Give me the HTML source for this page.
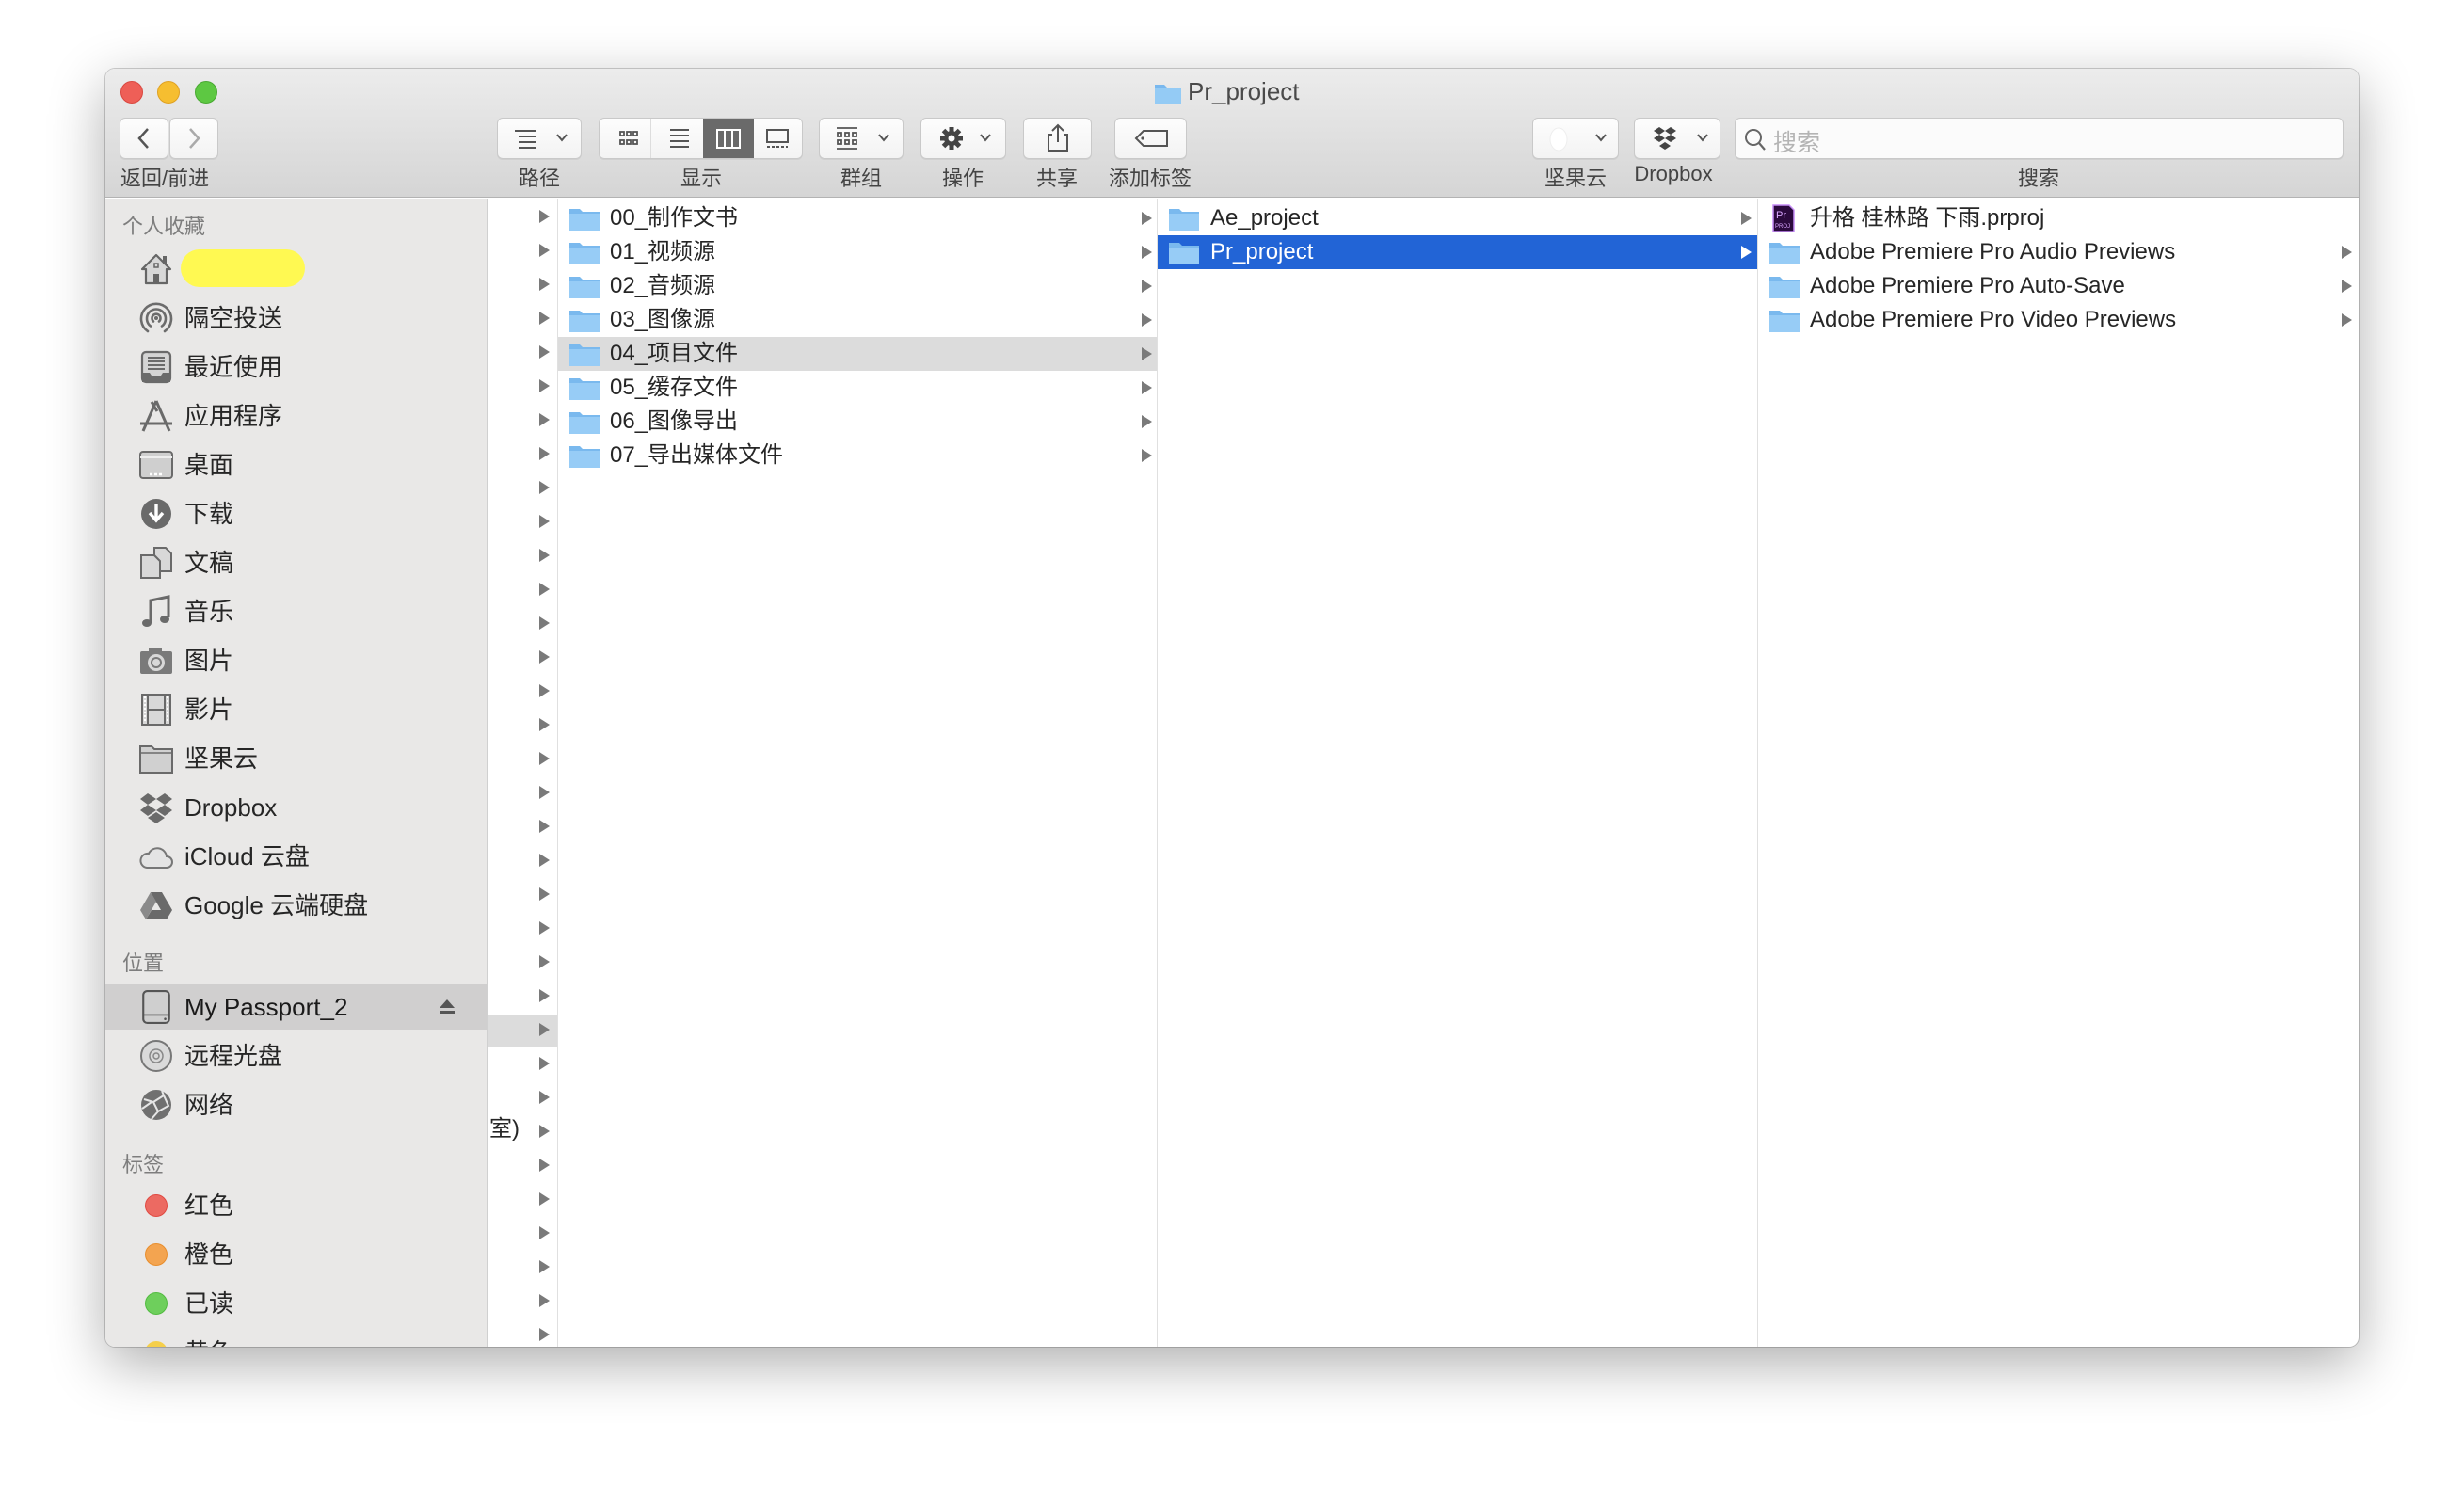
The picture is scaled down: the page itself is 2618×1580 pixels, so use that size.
<!DOCTYPE html>
<html><head><meta charset="utf-8">
<style>
*{margin:0;padding:0;box-sizing:border-box}
body{width:2618px;height:1580px;background:#fff;position:relative;overflow:hidden;font-family:"Liberation Sans","Noto Sans CJK SC",sans-serif;color:#262626}
.win{position:absolute;left:112px;top:73px;width:2394px;height:1358px;border-radius:10px;background:#fff;box-shadow:0 18px 60px rgba(0,0,0,.32),0 0 0 1px rgba(0,0,0,.18);overflow:hidden}
.tb{position:absolute;left:0;top:0;width:100%;height:137px;background:linear-gradient(#ececec,#d5d5d5);border-bottom:1px solid #b3b3b3}
.tl{position:absolute;top:13px;width:24px;height:24px;border-radius:50%}
.btn{position:absolute;top:52px;height:44px;background:linear-gradient(#fdfdfd,#f3f3f3);border:1px solid #c9c9c9;border-radius:6px;box-shadow:0 1px 0 rgba(0,0,0,.05)}
.lbl{position:absolute;top:99px;font-size:22px;color:#444;transform:translateX(-50%);white-space:nowrap}
.side{position:absolute;left:0;top:138px;width:406px;height:1220px;background:#e9e8e7;border-right:1px solid #d0d0d0}
.hd{position:absolute;left:18px;font-size:22px;color:#7d7d7d;transform:translateY(-50%)}
.it{position:absolute;left:0;width:405px;height:52px;font-size:26px;line-height:52px;padding-left:84px;color:#262626}
.ic{position:absolute;left:36px;top:8px;width:36px;height:36px}
.col{position:absolute;top:138px;height:1220px;border-right:1px solid #e0e0e0}
.row{position:absolute;left:0;width:100%;height:36px;font-size:24px;line-height:36px;white-space:nowrap}
.arr{position:absolute;width:0;height:0;border-top:7px solid transparent;border-bottom:7px solid transparent;border-left:11px solid #7a7a7a;top:11px}
.fd{position:absolute;top:6px;width:32px;height:25px}
</style></head><body>
<div class="win">
 <div class="tb">
  <div class="tl" style="left:16px;background:#ee5f57;border:1px solid #d9473f"></div>
  <div class="tl" style="left:55px;background:#f6be30;border:1px solid #dfa123"></div>
  <div class="tl" style="left:95px;background:#5dc842;border:1px solid #48a931"></div>
  <svg style="position:absolute;left:1114px;top:14px" width="30" height="24" viewBox="0 0 30 24"><path d="M1 3h10l3 3h15v17H1z" fill="#79b8ee"/><rect x="1" y="7" width="28" height="16" fill="#94cbf5"/></svg>
  <div style="position:absolute;left:1150px;top:9px;font-size:26px;color:#4a4a4a">Pr_project</div>

  <div class="btn" style="left:15px;width:52px"><svg width="50" height="42"><path d="M29 11l-9 10 9 10" fill="none" stroke="#555" stroke-width="2.5"/></svg></div>
  <div class="btn" style="left:68px;width:52px"><svg width="50" height="42"><path d="M21 11l9 10-9 10" fill="none" stroke="#aaa" stroke-width="2.5"/></svg></div>
  <div class="lbl" style="left:16px;transform:none">返回/前进</div>

  <div class="btn" style="left:416px;width:90px"><svg width="88" height="42"><g stroke="#555" stroke-width="2"><path d="M18 13h22M22 19h18M22 25h18M22 31h18"/></g><path d="M63 17l5 6 5-6" fill="none" stroke="#555" stroke-width="2"/></svg></div>
  <div class="lbl" style="left:461px">路径</div>

  <div class="btn" style="left:524px;width:217px;overflow:hidden">
   <svg width="217" height="42">
    <g fill="none" stroke="#555" stroke-width="1.8"><rect x="22" y="14" width="4" height="4"/><rect x="29" y="14" width="4" height="4"/><rect x="36" y="14" width="4" height="4"/><rect x="22" y="23" width="4" height="4"/><rect x="29" y="23" width="4" height="4"/><rect x="36" y="23" width="4" height="4"/></g>
    <line x1="54.5" y1="0" x2="54.5" y2="42" stroke="#ddd"/>
    <g stroke="#555" stroke-width="2"><path d="M75 12h20M75 18h20M75 24h20M75 30h20"/></g>
    <rect x="110" y="0" width="54" height="42" fill="#6a6a6a"/>
    <g fill="none" stroke="#fff" stroke-width="2"><rect x="125" y="12" width="24" height="19"/><path d="M133 12v19M141 12v19"/></g>
    <g fill="none" stroke="#555" stroke-width="2"><rect x="178" y="12" width="22" height="13"/><path d="M178 30h22" stroke-dasharray="3 2"/></g>
   </svg>
  </div>
  <div class="lbl" style="left:633px">显示</div>

  <div class="btn" style="left:758px;width:90px"><svg width="88" height="42"><g fill="none" stroke="#555" stroke-width="1.8"><path d="M18 10h22M18 32h22"/><rect x="19" y="15" width="4" height="4"/><rect x="27" y="15" width="4" height="4"/><rect x="35" y="15" width="4" height="4"/><rect x="19" y="23" width="4" height="4"/><rect x="27" y="23" width="4" height="4"/><rect x="35" y="23" width="4" height="4"/></g><path d="M63 17l5 6 5-6" fill="none" stroke="#555" stroke-width="2"/></svg></div>
  <div class="lbl" style="left:803px">群组</div>

  <div class="btn" style="left:866px;width:91px"><svg width="89" height="42"><g transform="translate(32 21)"><circle r="8" fill="#444"/><g stroke="#444" stroke-width="5"><path d="M0-12V12M-12 0H12M-8.5-8.5L8.5 8.5M-8.5 8.5L8.5-8.5"/></g><circle r="3.5" fill="#fafafa"/></g><path d="M63 17l5 6 5-6" fill="none" stroke="#555" stroke-width="2"/></svg></div>
  <div class="lbl" style="left:911px">操作</div>

  <div class="btn" style="left:975px;width:73px"><svg width="71" height="42"><path d="M30 17h-4v17h20V17h-4M36 7v18M30 13l6-6 6 6" fill="none" stroke="#555" stroke-width="2"/></svg></div>
  <div class="lbl" style="left:1011px">共享</div>

  <div class="btn" style="left:1072px;width:77px"><svg width="75" height="42"><path d="M30 13h25v16H30l-8-8z" fill="none" stroke="#555" stroke-width="2"/><circle cx="29" cy="21" r="1.6" fill="#555"/></svg></div>
  <div class="lbl" style="left:1110px">添加标签</div>

  <div class="btn" style="left:1516px;width:92px"><svg width="90" height="42"><ellipse cx="27" cy="22" rx="9" ry="12" fill="#fff" stroke="#eee"/><path d="M67 17l5 6 5-6" fill="none" stroke="#555" stroke-width="2"/></svg></div>
  <div class="lbl" style="left:1562px">坚果云</div>

  <div class="btn" style="left:1624px;width:92px"><svg width="90" height="42"><g fill="#444"><path d="M20 13l6-4 6 4-6 4zM32 13l6-4 6 4-6 4zM20 21l6-4 6 4-6 4zM32 21l6-4 6 4-6 4zM26 29l6-4 6 4-6 4z"/></g><path d="M67 17l5 6 5-6" fill="none" stroke="#555" stroke-width="2"/></svg></div>
  <div class="lbl" style="left:1666px">Dropbox</div>

  <div class="btn" style="left:1731px;width:647px;background:#fbfbfb"><svg style="position:absolute;left:8px;top:9px" width="26" height="26"><circle cx="11" cy="11" r="8" fill="none" stroke="#666" stroke-width="2"/><path d="M17 17l6 7" stroke="#666" stroke-width="2.2"/></svg><span style="position:absolute;left:40px;top:6px;font-size:25px;color:#b4b4b4">搜索</span></div>
  <div class="lbl" style="left:2054px">搜索</div>
 </div>

 <div class="side">
  <div class="hd" style="top:28px">个人收藏</div>
  <div class="it" style="top:49px"><svg class="ic" viewBox="0 0 36 36"><path d="M3 18L18 3l15 15h-4v15H7V18z" fill="#d8d8d8" stroke="#666" stroke-width="2.2" stroke-linejoin="round"/><rect x="15" y="23" width="6" height="10" fill="#666"/><rect x="16" y="12" width="4" height="4" fill="none" stroke="#666" stroke-width="1.5"/><rect x="25" y="4" width="4" height="8" fill="#666"/></svg><div style="position:absolute;left:80px;top:5px;width:132px;height:40px;background:#fff952;border-radius:20px"></div></div>
  <div class="it" style="top:101px"><svg class="ic" viewBox="0 0 36 36"><g fill="none" stroke="#6c6c6c" stroke-width="2.6" stroke-linecap="round"><path d="M9 32A16 16 0 1 1 27 32"/><path d="M12 26.5A10 10 0 1 1 24 26.5"/><path d="M15 21.5A4.5 4.5 0 1 1 21 21.5"/></g><circle cx="18" cy="18" r="2" fill="#6c6c6c"/></svg>隔空投送</div>
  <div class="it" style="top:153px"><svg class="ic" viewBox="0 0 36 36"><rect x="3" y="2" width="30" height="32" rx="4" fill="#d4d4d4" stroke="#6a6a6a" stroke-width="2.2"/><path d="M9 8h18M9 12h18M9 16h18M9 20h18" stroke="#6a6a6a" stroke-width="2"/><path d="M3 24h8l2 3h10l2-3h8v10H3z" fill="#6a6a6a"/></svg>最近使用</div>
  <div class="it" style="top:205px"><svg class="ic" viewBox="0 0 36 36"><path d="M18 2L4 34M18 2l14 32M1 26h34M13 3l6 10" fill="none" stroke="#6a6a6a" stroke-width="3"/></svg>应用程序</div>
  <div class="it" style="top:257px"><svg class="ic" viewBox="0 0 36 36"><rect x="1" y="4" width="34" height="28" rx="3" fill="#cfcfcf" stroke="#6a6a6a" stroke-width="2"/><rect x="1" y="8" width="34" height="3" fill="#eee"/><path d="M11 28h3M16 28h3M21 28h3" stroke="#fff" stroke-width="2.4"/></svg>桌面</div>
  <div class="it" style="top:309px"><svg class="ic" viewBox="0 0 36 36"><circle cx="18" cy="18" r="16" fill="#6a6a6a"/><path d="M18 8v16M11 17l7 8 7-8" fill="none" stroke="#fff" stroke-width="3.4"/></svg>下载</div>
  <div class="it" style="top:361px"><svg class="ic" viewBox="0 0 36 36"><path d="M2 10h14l6 6v18H2z" fill="#d8d8d8" stroke="#6a6a6a" stroke-width="2"/><path d="M16 2h12l6 6v19H22V16l-6-6z" fill="#d8d8d8" stroke="#6a6a6a" stroke-width="2"/></svg>文稿</div>
  <div class="it" style="top:413px"><svg class="ic" viewBox="0 0 36 36"><path d="M12 30V6l19-4v22" fill="none" stroke="#6a6a6a" stroke-width="3"/><ellipse cx="8" cy="30" rx="5" ry="4" fill="#6a6a6a"/><ellipse cx="27" cy="26" rx="5" ry="4" fill="#6a6a6a"/></svg>音乐</div>
  <div class="it" style="top:465px"><svg class="ic" viewBox="0 0 36 36"><rect x="1" y="8" width="34" height="24" rx="2" fill="#7a7a7a"/><rect x="10" y="4" width="14" height="6" fill="#7a7a7a"/><circle cx="18" cy="20" r="9" fill="#d8d8d8"/><circle cx="18" cy="20" r="6" fill="#7a7a7a"/><circle cx="18" cy="20" r="4" fill="#d8d8d8"/></svg>图片</div>
  <div class="it" style="top:517px"><svg class="ic" viewBox="0 0 36 36"><rect x="3" y="2" width="30" height="32" fill="#d8d8d8" stroke="#6a6a6a" stroke-width="2"/><path d="M9 2v32M27 2v32M9 18h18" stroke="#6a6a6a" stroke-width="2"/><path d="M6 4v28M30 4v28" stroke="#fff" stroke-width="2" stroke-dasharray="2 2"/></svg>影片</div>
  <div class="it" style="top:569px"><svg class="ic" viewBox="0 0 36 36"><path d="M1 5h12l3 3h19v25H1z" fill="#d0d0d0" stroke="#6a6a6a" stroke-width="2"/><path d="M1 12h34" stroke="#6a6a6a" stroke-width="1.5"/></svg>坚果云</div>
  <div class="it" style="top:621px"><svg class="ic" viewBox="0 0 36 36"><g fill="#6a6a6a"><path d="M1 9l8-6 9 6-9 6zM18 9l9-6 8 6-8 6zM1 21l8-6 9 6-9 6zM18 21l9-6 8 6-8 6zM9 29l9-6 9 6-9 6z"/></g></svg>Dropbox</div>
  <div class="it" style="top:673px"><svg class="ic" viewBox="0 0 36 36"><path d="M8 30h21a6 6 0 0 0 0-12 10 10 0 0 0-19-3 7.5 7.5 0 0 0-2 15z" fill="#e4e4e4" stroke="#777" stroke-width="2"/></svg>iCloud 云盘</div>
  <div class="it" style="top:725px"><svg class="ic" viewBox="0 0 36 36"><path d="M12 4h12l11 19H23z" fill="#6a6a6a"/><path d="M12 4L1 23l6 10 11-19z" fill="#8a8a8a"/><path d="M7 33h22l6-10H13z" fill="#6a6a6a"/></svg>Google 云端硬盘</div>

  <div class="hd" style="top:811px">位置</div>
  <div class="it" style="top:835px;height:48px;line-height:48px;background:#d0cfcf;color:#1a1a1a"><svg class="ic" style="top:6px" viewBox="0 0 30 34"><rect x="2" y="1" width="26" height="32" rx="4" fill="#cfcfcf" stroke="#555" stroke-width="2"/><path d="M2 25h26" stroke="#555" stroke-width="1.5"/><circle cx="24" cy="29" r="1.2" fill="#555"/></svg>My Passport_2<svg style="position:absolute;left:353px;top:15px" width="20" height="18"><path d="M10 1L2 10h16z" fill="#555"/><rect x="2" y="13" width="16" height="3" fill="#555"/></svg></div>
  <div class="it" style="top:885px"><svg class="ic" viewBox="0 0 36 36"><circle cx="18" cy="18" r="16" fill="#dadada" stroke="#777" stroke-width="2"/><circle cx="18" cy="18" r="7" fill="none" stroke="#888" stroke-width="1.5"/><circle cx="18" cy="18" r="3" fill="none" stroke="#888" stroke-width="1.5"/></svg>远程光盘</div>
  <div class="it" style="top:937px"><svg class="ic" viewBox="0 0 36 36"><circle cx="18" cy="18" r="16" fill="#707070"/><path d="M5 12l10 3 5 10-7 8M15 15l11-7 5 11-11 6M24 3l2 5M3 22l10-7" fill="none" stroke="#e6e6e6" stroke-width="2"/></svg>网络</div>

  <div class="hd" style="top:1025px">标签</div>
  <div class="it" style="top:1044px"><div style="position:absolute;left:42px;top:14px;width:24px;height:24px;border-radius:50%;background:#ec6a62;border:1px solid #e04a42"></div>红色</div>
  <div class="it" style="top:1096px"><div style="position:absolute;left:42px;top:14px;width:24px;height:24px;border-radius:50%;background:#f3a450;border:1px solid #e88d2c"></div>橙色</div>
  <div class="it" style="top:1148px"><div style="position:absolute;left:42px;top:14px;width:24px;height:24px;border-radius:50%;background:#6ecf5c;border:1px solid #52bb40"></div>已读</div>
  <div class="it" style="top:1200px"><div style="position:absolute;left:42px;top:14px;width:24px;height:24px;border-radius:50%;background:#f5cf4b"></div>黄色</div>
 </div>

 <div class="col" style="left:406px;width:75px">
  <div style="position:absolute;left:0;top:867px;width:74px;height:35px;background:#dcdcdc"></div>
  <div style="position:absolute;left:2px;top:971px;font-size:24px;line-height:36px">室)</div>
 </div>

 <div class="col" style="left:481px;width:637px">
  <div class="row" style="top:3px"><svg class="fd" style="left:12px" viewBox="0 0 32 25"><path d="M0 2h11l3 3h18v20H0z" fill="#7ab9ee"/><rect x="0" y="7" width="32" height="18" fill="#97ccf6"/></svg><span style="position:absolute;left:55px">00_制作文书</span><i class="arr" style="left:620px"></i></div>
  <div class="row" style="top:39px"><svg class="fd" style="left:12px" viewBox="0 0 32 25"><path d="M0 2h11l3 3h18v20H0z" fill="#7ab9ee"/><rect x="0" y="7" width="32" height="18" fill="#97ccf6"/></svg><span style="position:absolute;left:55px">01_视频源</span><i class="arr" style="left:620px"></i></div>
  <div class="row" style="top:75px"><svg class="fd" style="left:12px" viewBox="0 0 32 25"><path d="M0 2h11l3 3h18v20H0z" fill="#7ab9ee"/><rect x="0" y="7" width="32" height="18" fill="#97ccf6"/></svg><span style="position:absolute;left:55px">02_音频源</span><i class="arr" style="left:620px"></i></div>
  <div class="row" style="top:111px"><svg class="fd" style="left:12px" viewBox="0 0 32 25"><path d="M0 2h11l3 3h18v20H0z" fill="#7ab9ee"/><rect x="0" y="7" width="32" height="18" fill="#97ccf6"/></svg><span style="position:absolute;left:55px">03_图像源</span><i class="arr" style="left:620px"></i></div>
  <div class="row" style="top:147px;background:#dcdcdc"><svg class="fd" style="left:12px" viewBox="0 0 32 25"><path d="M0 2h11l3 3h18v20H0z" fill="#7ab9ee"/><rect x="0" y="7" width="32" height="18" fill="#97ccf6"/></svg><span style="position:absolute;left:55px">04_项目文件</span><i class="arr" style="left:620px"></i></div>
  <div class="row" style="top:183px"><svg class="fd" style="left:12px" viewBox="0 0 32 25"><path d="M0 2h11l3 3h18v20H0z" fill="#7ab9ee"/><rect x="0" y="7" width="32" height="18" fill="#97ccf6"/></svg><span style="position:absolute;left:55px">05_缓存文件</span><i class="arr" style="left:620px"></i></div>
  <div class="row" style="top:219px"><svg class="fd" style="left:12px" viewBox="0 0 32 25"><path d="M0 2h11l3 3h18v20H0z" fill="#7ab9ee"/><rect x="0" y="7" width="32" height="18" fill="#97ccf6"/></svg><span style="position:absolute;left:55px">06_图像导出</span><i class="arr" style="left:620px"></i></div>
  <div class="row" style="top:255px"><svg class="fd" style="left:12px" viewBox="0 0 32 25"><path d="M0 2h11l3 3h18v20H0z" fill="#7ab9ee"/><rect x="0" y="7" width="32" height="18" fill="#97ccf6"/></svg><span style="position:absolute;left:55px">07_导出媒体文件</span><i class="arr" style="left:620px"></i></div>
 </div>

 <div class="col" style="left:1118px;width:638px">
  <div class="row" style="top:3px"><svg class="fd" style="left:12px" viewBox="0 0 32 25"><path d="M0 2h11l3 3h18v20H0z" fill="#7ab9ee"/><rect x="0" y="7" width="32" height="18" fill="#97ccf6"/></svg><span style="position:absolute;left:56px">Ae_project</span><i class="arr" style="left:620px"></i></div>
  <div class="row" style="top:39px;background:#2264d6;color:#fff"><svg class="fd" style="left:12px" viewBox="0 0 32 25"><path d="M0 2h11l3 3h18v20H0z" fill="#7ab9ee"/><rect x="0" y="7" width="32" height="18" fill="#97ccf6"/></svg><span style="position:absolute;left:56px">Pr_project</span><i class="arr" style="left:620px;border-left-color:#fff"></i></div>
 </div>

 <div class="col" style="left:1756px;width:638px;border-right:none">
  <div class="row" style="top:3px"><svg style="position:absolute;left:15px;top:3px" width="24" height="30"><path d="M1 1h17l5 5v23H1z" fill="#2b0a3d" stroke="#c58cf5" stroke-width="1.5"/><text x="4" y="15" font-size="11" fill="#d9a6ff" font-family="Liberation Sans">Pr</text><text x="3" y="25" font-size="6" fill="#d9a6ff" font-family="Liberation Sans">PROJ</text></svg><span style="position:absolute;left:55px">升格 桂林路 下雨.prproj</span></div>
  <div class="row" style="top:39px"><svg class="fd" style="left:12px" viewBox="0 0 32 25"><path d="M0 2h11l3 3h18v20H0z" fill="#7ab9ee"/><rect x="0" y="7" width="32" height="18" fill="#97ccf6"/></svg><span style="position:absolute;left:55px">Adobe Premiere Pro Audio Previews</span><i class="arr" style="left:620px"></i></div>
  <div class="row" style="top:75px"><svg class="fd" style="left:12px" viewBox="0 0 32 25"><path d="M0 2h11l3 3h18v20H0z" fill="#7ab9ee"/><rect x="0" y="7" width="32" height="18" fill="#97ccf6"/></svg><span style="position:absolute;left:55px">Adobe Premiere Pro Auto-Save</span><i class="arr" style="left:620px"></i></div>
  <div class="row" style="top:111px"><svg class="fd" style="left:12px" viewBox="0 0 32 25"><path d="M0 2h11l3 3h18v20H0z" fill="#7ab9ee"/><rect x="0" y="7" width="32" height="18" fill="#97ccf6"/></svg><span style="position:absolute;left:55px">Adobe Premiere Pro Video Previews</span><i class="arr" style="left:620px"></i></div>
 </div>
</div>
<svg style="position:absolute;left:573px;top:223px" width="14" height="1206">
 <g fill="#7a7a7a">
  <path d="M0 0l11 7-11 7z" transform="translate(0,0)"/><path d="M0 0l11 7-11 7z" transform="translate(0,36)"/><path d="M0 0l11 7-11 7z" transform="translate(0,72)"/><path d="M0 0l11 7-11 7z" transform="translate(0,108)"/><path d="M0 0l11 7-11 7z" transform="translate(0,144)"/><path d="M0 0l11 7-11 7z" transform="translate(0,180)"/><path d="M0 0l11 7-11 7z" transform="translate(0,216)"/><path d="M0 0l11 7-11 7z" transform="translate(0,252)"/><path d="M0 0l11 7-11 7z" transform="translate(0,288)"/><path d="M0 0l11 7-11 7z" transform="translate(0,324)"/><path d="M0 0l11 7-11 7z" transform="translate(0,360)"/><path d="M0 0l11 7-11 7z" transform="translate(0,396)"/><path d="M0 0l11 7-11 7z" transform="translate(0,432)"/><path d="M0 0l11 7-11 7z" transform="translate(0,468)"/><path d="M0 0l11 7-11 7z" transform="translate(0,504)"/><path d="M0 0l11 7-11 7z" transform="translate(0,540)"/><path d="M0 0l11 7-11 7z" transform="translate(0,576)"/><path d="M0 0l11 7-11 7z" transform="translate(0,612)"/><path d="M0 0l11 7-11 7z" transform="translate(0,648)"/><path d="M0 0l11 7-11 7z" transform="translate(0,684)"/><path d="M0 0l11 7-11 7z" transform="translate(0,720)"/><path d="M0 0l11 7-11 7z" transform="translate(0,756)"/><path d="M0 0l11 7-11 7z" transform="translate(0,792)"/><path d="M0 0l11 7-11 7z" transform="translate(0,828)"/><path d="M0 0l11 7-11 7z" transform="translate(0,864)"/><path d="M0 0l11 7-11 7z" transform="translate(0,900)"/><path d="M0 0l11 7-11 7z" transform="translate(0,936)"/><path d="M0 0l11 7-11 7z" transform="translate(0,972)"/><path d="M0 0l11 7-11 7z" transform="translate(0,1008)"/><path d="M0 0l11 7-11 7z" transform="translate(0,1044)"/><path d="M0 0l11 7-11 7z" transform="translate(0,1080)"/><path d="M0 0l11 7-11 7z" transform="translate(0,1116)"/><path d="M0 0l11 7-11 7z" transform="translate(0,1152)"/><path d="M0 0l11 7-11 7z" transform="translate(0,1188)"/>
 </g>
</svg>
</body></html>
